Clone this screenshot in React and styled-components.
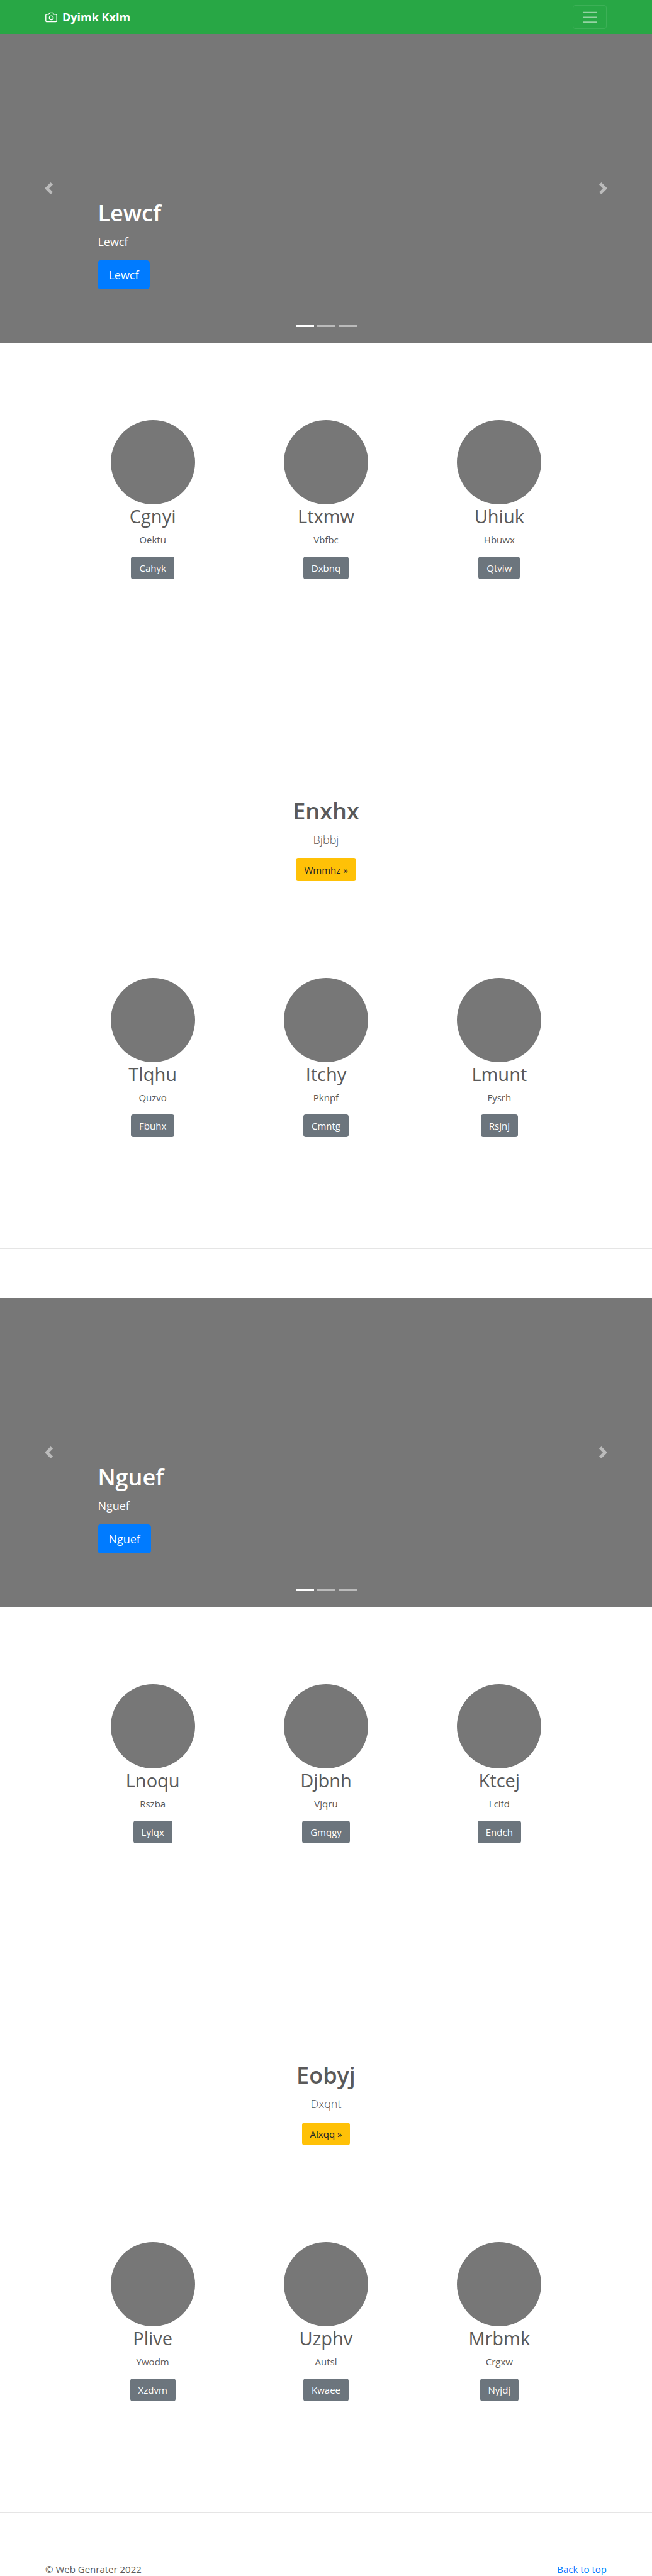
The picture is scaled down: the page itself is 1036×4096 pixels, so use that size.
import React from 'react';
import styled, { createGlobalStyle } from 'styled-components';

const GlobalStyle = createGlobalStyle`
  *, *::before, *::after { box-sizing: border-box; }
  body {
    margin: 0;
    background: #fff;
    color: #5a5a5a;
    font-family: "Segoe UI", "Open Sans", "Noto Sans", sans-serif;
    font-size: 15px;
    line-height: 23px;
  }
  h1, h2, p { margin: 0; }
`;

const Container = styled.div`
  width: 100%;
  max-width: 922px;
  margin: 0 auto;
  padding: 0 15px;
  display: flex;
  align-items: center;
  justify-content: space-between;
`;

const Navbar = styled.header`
  background: #28a745;
  padding: 8px 0;
`;

const Brand = styled.a`
  display: flex;
  align-items: center;
  gap: 8px;
  color: #fff;
  font-size: 18px;
  font-weight: 700;
  line-height: 28px;
  text-decoration: none;
`;

const Toggler = styled.button`
  display: flex;
  align-items: center;
  justify-content: center;
  width: 54px;
  height: 38px;
  padding: 0;
  background: transparent;
  border: 1px solid rgba(255, 255, 255, 0.1);
  border-radius: 4px;
`;

const CarouselFrame = styled.section`
  position: relative;
  display: flex;
  flex-direction: column;
  justify-content: flex-end;
  min-height: 491px;
  padding: 0 15% 85px;
  background: #777;
  color: #fff;
`;

const Caption = styled.div`
  display: flex;
  flex-direction: column;
  align-items: flex-start;
`;

const DisplayTitle = styled.h1`
  margin-bottom: 8px;
  font-size: 36px;
  font-weight: 600;
  line-height: 46px;
`;

const CaptionText = styled.p`
  margin-bottom: 15px;
  font-size: 18px;
  line-height: 29px;
`;

const SlideControl = styled.button`
  position: absolute;
  top: 0;
  bottom: 0;
  ${(p) => p.$side}: 0;
  display: flex;
  align-items: center;
  justify-content: center;
  width: 15%;
  padding: 0;
  background: transparent;
  border: 0;
  opacity: 0.5;
`;

const Indicators = styled.div`
  position: absolute;
  left: 0;
  right: 0;
  bottom: 25px;
  display: flex;
  justify-content: center;
  gap: 5px;
`;

const Indicator = styled.button`
  width: 29px;
  height: 3px;
  padding: 0;
  border: 0;
  background: #fff;
  opacity: ${(p) => (p.$active ? 1 : 0.5)};
`;

const tones = {
  primary: { background: '#007bff', color: '#fff' },
  secondary: { background: '#6c757d', color: '#fff' },
  warning: { background: '#ffc107', color: '#212529' },
};

const ButtonLink = styled.a`
  display: inline-block;
  padding: ${(p) => (p.$large ? '9px 17px' : '7px 13px')};
  border-radius: ${(p) => (p.$large ? 5 : 4)}px;
  background: ${(p) => tones[p.$tone].background};
  color: ${(p) => tones[p.$tone].color};
  font-size: ${(p) => (p.$large ? 18 : 15)}px;
  line-height: ${(p) => (p.$large ? 28 : 22)}px;
  text-decoration: none;
`;

const ProfileGrid = styled.section`
  display: grid;
  grid-template-columns: repeat(3, 1fr);
  max-width: 826px;
  margin: 0 auto;
  padding: ${(p) => (p.$first ? 123 : 0)}px 0 177px;
`;

const Profile = styled.article`
  display: flex;
  flex-direction: column;
  align-items: center;
`;

const Avatar = styled.div`
  width: 134px;
  height: 134px;
  border-radius: 50%;
  background: #777;
`;

const ProfileName = styled.h2`
  margin-bottom: 8px;
  font-size: 29px;
  font-weight: 400;
  line-height: 37px;
`;

const ProfileText = styled.p`
  margin-bottom: 15px;
`;

const Divider = styled.hr`
  height: 1px;
  margin: 0;
  border: 0;
  background: #e5e5e5;
`;

const Feature = styled.section`
  display: flex;
  flex-direction: column;
  align-items: center;
  padding: 168px 15px 154px;
`;

const Lead = styled.p`
  margin-bottom: 15px;
  font-size: 18px;
  font-weight: 300;
  line-height: 29px;
`;

const Block = styled.div`
  & + & {
    margin-top: 78px;
  }
`;

const Footer = styled.footer`
  padding-top: 78px;
  line-height: 22px;
`;

const TopLink = styled.a`
  color: #007bff;
  text-decoration: none;
`;

const blocks = [
  {
    slide: 'Lewcf',
    top: [
      ['Cgnyi', 'Oektu', 'Cahyk'],
      ['Ltxmw', 'Vbfbc', 'Dxbnq'],
      ['Uhiuk', 'Hbuwx', 'Qtviw'],
    ],
    feature: ['Enxhx', 'Bjbbj', 'Wmmhz »'],
    bottom: [
      ['Tlqhu', 'Quzvo', 'Fbuhx'],
      ['Itchy', 'Pknpf', 'Cmntg'],
      ['Lmunt', 'Fysrh', 'Rsjnj'],
    ],
  },
  {
    slide: 'Nguef',
    top: [
      ['Lnoqu', 'Rszba', 'Lylqx'],
      ['Djbnh', 'Vjqru', 'Gmqgy'],
      ['Ktcej', 'Lclfd', 'Endch'],
    ],
    feature: ['Eobyj', 'Dxqnt', 'Alxqq »'],
    bottom: [
      ['Plive', 'Ywodm', 'Xzdvm'],
      ['Uzphv', 'Autsl', 'Kwaee'],
      ['Mrbmk', 'Crgxw', 'Nyjdj'],
    ],
  },
];

function CameraIcon() {
  return (
    <svg width="19" height="19" viewBox="0 0 24 24" fill="none" stroke="currentColor" strokeWidth="1.8" strokeLinecap="round" strokeLinejoin="round" aria-hidden="true">
      <path d="M23 19a2 2 0 0 1-2 2H3a2 2 0 0 1-2-2V8a2 2 0 0 1 2-2h4l2-3h6l2 3h4a2 2 0 0 1 2 2z" />
      <circle cx="12" cy="13" r="4" />
    </svg>
  );
}

function MenuIcon() {
  return (
    <svg width="29" height="29" viewBox="0 0 30 30" fill="none" stroke="#fff" strokeOpacity="0.5" strokeWidth="2" strokeLinecap="round" aria-hidden="true">
      <path d="M4 7h22M4 15h22M4 23h22" />
    </svg>
  );
}

function Chevron({ d }) {
  return (
    <svg width="19" height="19" viewBox="0 0 8 8" fill="#fff" aria-hidden="true">
      <path d={d} />
    </svg>
  );
}

function Carousel({ text }) {
  return (
    <CarouselFrame>
      <Caption>
        <DisplayTitle>{text}</DisplayTitle>
        <CaptionText>{text}</CaptionText>
        <ButtonLink href="#" $tone="primary" $large>{text}</ButtonLink>
      </Caption>
      <SlideControl type="button" $side="left" aria-label="Previous">
        <Chevron d="M5.25 0l-4 4 4 4 1.5-1.5-2.5-2.5 2.5-2.5-1.5-1.5z" />
      </SlideControl>
      <SlideControl type="button" $side="right" aria-label="Next">
        <Chevron d="M2.75 0l-1.5 1.5 2.5 2.5-2.5 2.5 1.5 1.5 4-4-4-4z" />
      </SlideControl>
      <Indicators>
        {[1, 2, 3].map((n) => (
          <Indicator key={n} type="button" $active={n === 1} aria-label={`Slide ${n}`} />
        ))}
      </Indicators>
    </CarouselFrame>
  );
}

function Profiles({ items, first }) {
  return (
    <ProfileGrid $first={first}>
      {items.map(([name, text, action]) => (
        <Profile key={name}>
          <Avatar />
          <ProfileName>{name}</ProfileName>
          <ProfileText>{text}</ProfileText>
          <ButtonLink href="#" $tone="secondary">{action}</ButtonLink>
        </Profile>
      ))}
    </ProfileGrid>
  );
}

export default function App() {
  return (
    <>
      <GlobalStyle />
      <Navbar>
        <Container>
          <Brand href="#">
            <CameraIcon />
            Dyimk Kxlm
          </Brand>
          <Toggler type="button" aria-label="Toggle navigation">
            <MenuIcon />
          </Toggler>
        </Container>
      </Navbar>
      <main>
        {blocks.map(({ slide, top, feature, bottom }) => (
          <Block key={slide}>
            <Carousel text={slide} />
            <Profiles items={top} first />
            <Divider />
            <Feature>
              <DisplayTitle as="h2">{feature[0]}</DisplayTitle>
              <Lead>{feature[1]}</Lead>
              <ButtonLink href="#" $tone="warning">{feature[2]}</ButtonLink>
            </Feature>
            <Profiles items={bottom} />
            <Divider />
          </Block>
        ))}
      </main>
      <Footer>
        <Container>
          <p>© Web Genrater 2022</p>
          <TopLink href="#">Back to top</TopLink>
        </Container>
      </Footer>
    </>
  );
}
